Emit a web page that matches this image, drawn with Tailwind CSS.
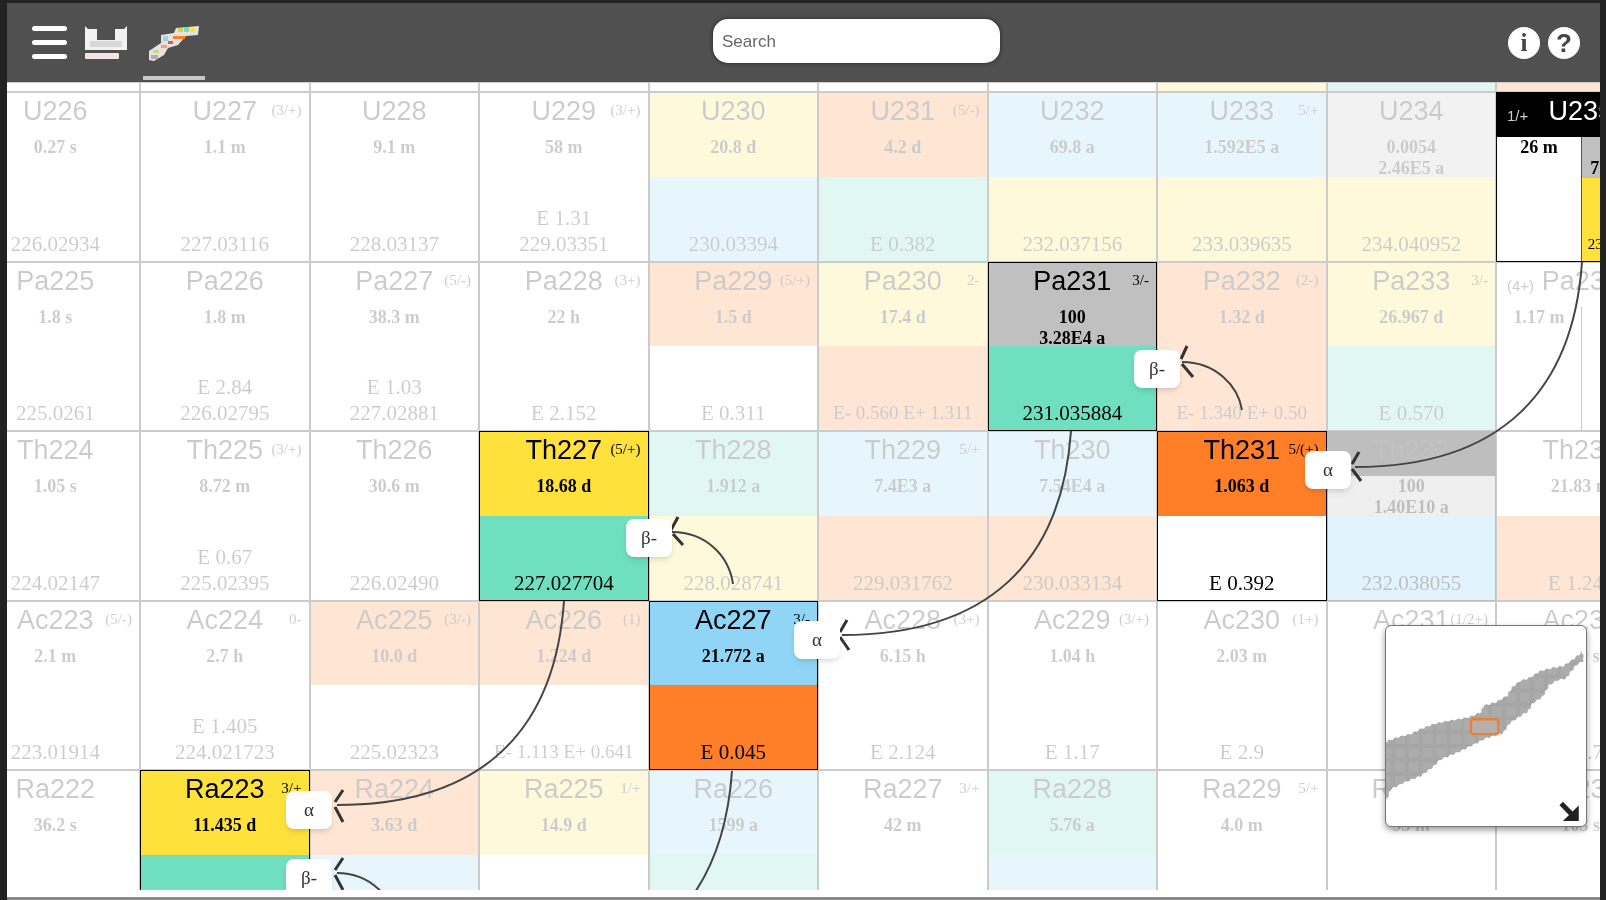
<!DOCTYPE html>
<html>
<head>
<meta charset="utf-8">
<title>Nuclide chart</title>
<script src="https://cdn.jsdelivr.net/npm/@tailwindcss/browser@4"></script>
</head>
<body class="m-0 overflow-hidden bg-[#222] font-['Liberation_Serif',serif]">
<div class="flex h-[900px] w-[1606px] flex-col bg-[#222] pt-[3px] pr-[6px] pl-[7px] blur-[0.6px]">

  <header class="relative flex h-[79px] shrink-0 items-center bg-[#505050] pl-[25px] pr-[20px]">
    <div class="flex h-[33px] w-[35px] flex-col justify-between">
      <span class="h-[5px] rounded-sm bg-white"></span>
      <span class="h-[5px] rounded-sm bg-white"></span>
      <span class="h-[5px] rounded-sm bg-white"></span>
    </div>
    <svg class="ml-[17px]" width="44" height="36" viewBox="84 27 44 36"><path d="M85 28 L88 31 H97 V42 H115 V31 L124 31 L127 28 V52 H85 Z" fill="#f2f2f2"/><rect x="90" y="43" width="32" height="6" fill="#d8d8d8"/><rect x="85" y="55" width="34" height="6" rx="1" fill="#f4e6e6"/></svg>
    <div class="relative ml-[15px] flex h-[79px] w-[62px] items-center justify-center">
      <svg width="52" height="36" viewBox="147 27 52 36"><path d="M148 62 L148 53 L160 45 L160 37 L173 35 L175 30 L198 28 L197 37 L185 38 L177 47 L167 50 L163 57 L153 63 Z" fill="#e8e2de"/><rect x="177" y="30" width="5" height="4" fill="#d8d050"/><rect x="183" y="29" width="5" height="5" fill="#6fdfc0"/><rect x="189" y="30" width="5" height="4" fill="#ffe13c"/><rect x="172" y="38" width="12" height="3" fill="#ff7f28"/><rect x="162" y="38" width="5" height="5" fill="#96d4f0"/><rect x="167" y="43" width="5" height="3" fill="#e05a50"/><rect x="160" y="47" width="6" height="3" fill="#ff9a80"/><rect x="152" y="52" width="6" height="3" fill="#c8d890"/><rect x="150" y="57" width="7" height="4" fill="#c0a8a8"/></svg>
      <span class="absolute right-0 bottom-[2px] left-0 h-[4px] bg-[#c8c8c8]"></span>
    </div>
    <input class="absolute top-[16px] left-[706px] h-[44px] w-[287px] rounded-[15px] bg-white pt-[2px] pl-[9px] font-['Liberation_Sans',sans-serif] text-[17px] shadow-[0_0_4px_#222] placeholder:text-[#666]" placeholder="Search">
    <div class="ml-auto flex gap-[8px]">
      <span class="flex size-[32px] items-center justify-center rounded-full bg-white text-[25px] font-bold leading-none text-[#444]">i</span>
      <span class="flex size-[32px] items-center justify-center rounded-full bg-white font-['Liberation_Sans',sans-serif] text-[26px] font-bold leading-none text-[#444]">?</span>
    </div>
  </header>

  <main class="flex flex-1 flex-col bg-white">
    <div class="relative h-[808px] shrink-0 overflow-hidden">
      <div class="ml-[-36.5px] grid grid-cols-[repeat(10,169.5px)] grid-rows-[10px_repeat(5,169.5px)] text-center text-black *:relative *:border *:border-black [&_h3]:h-[44px] [&_h3]:pt-[1px] [&_h3]:font-['Liberation_Sans',sans-serif] [&_h3]:text-[27px] [&_h3]:leading-[34px] [&_h4]:text-[21px] [&_h4]:font-normal [&_h4]:leading-[26px] [&_p]:text-[18px] [&_p]:font-bold [&_p]:leading-[21px] [&_i]:absolute [&_i]:top-[6px] [&_i]:right-[7px] [&_i]:text-[15px] [&_i]:not-italic [&_section]:flex [&_section]:h-1/2 [&_section]:flex-col [&_section]:justify-end [&_section]:pb-[4px]">

        <!-- row above, only its lower edge shows -->
        <div class="opacity-20"></div><div class="opacity-20"></div><div class="opacity-20"></div><div class="opacity-20"></div><div class="opacity-20"></div><div class="opacity-20"></div><div class="opacity-20"></div>
        <div class="bg-[#ffe650] opacity-20"></div><div class="bg-[#6fdfc0] opacity-20"></div><div class="bg-[#ff7f28] opacity-20"></div>

        <!-- U -->
        <div class="opacity-20"><div class="h-1/2"><h3>U226</h3><p>0.27 s</p></div><section><h4>226.02934</h4></section></div>
        <div class="opacity-20"><div class="h-1/2"><i>(3/+)</i><h3>U227</h3><p>1.1 m</p></div><section><h4>227.03116</h4></section></div>
        <div class="opacity-20"><div class="h-1/2"><h3>U228</h3><p>9.1 m</p></div><section><h4>228.03137</h4></section></div>
        <div class="opacity-20"><div class="h-1/2"><i>(3/+)</i><h3>U229</h3><p>58 m</p></div><section><h4>E 1.31</h4><h4>229.03351</h4></section></div>
        <div class="opacity-20"><div class="h-1/2 bg-[#ffe650]"><h3>U230</h3><p>20.8 d</p></div><section class="bg-[#8cd7fa]"><h4>230.03394</h4></section></div>
        <div class="opacity-20"><div class="h-1/2 bg-[#ff7f28]"><i>(5/-)</i><h3>U231</h3><p>4.2 d</p></div><section class="bg-[#6fdfc0]"><h4>E 0.382</h4></section></div>
        <div class="opacity-20"><div class="h-1/2 bg-[#8cd7fa]"><h3>U232</h3><p>69.8 a</p></div><section class="bg-[#ffe650]"><h4>232.037156</h4></section></div>
        <div class="opacity-20"><div class="h-1/2 bg-[#8cd7fa]"><i>5/+</i><h3>U233</h3><p>1.592E5 a</p></div><section class="bg-[#ffe650]"><h4>233.039635</h4></section></div>
        <div class="opacity-20"><div class="h-1/2 bg-[#c0c0c0]"><h3>U234</h3><p>0.0054</p><p>2.46E5 a</p></div><section class="bg-[#ffe650]"><h4>234.040952</h4></section></div>
        <div class="flex flex-col bg-white">
          <h3 class="relative shrink-0 bg-black text-white"><i class="!right-auto !left-[10px] text-[#ccc]">1/+</i>U235</h3>
          <div class="flex flex-1">
            <div class="w-[85px] shrink-0 border-r border-[#555]"><p>26 m</p></div>
            <div class="flex flex-1 flex-col"><div class="h-[41px] bg-[#c0c0c0]"><p>0.72</p><p>7.04E8 a</p></div><section class="flex-1 !h-auto bg-[#ffe13c]"><h4 class="!text-[15px]">235.043923</h4></section></div>
          </div>
        </div>

        <!-- Pa -->
        <div class="opacity-20"><div class="h-1/2"><h3>Pa225</h3><p>1.8 s</p></div><section><h4>225.0261</h4></section></div>
        <div class="opacity-20"><div class="h-1/2"><h3>Pa226</h3><p>1.8 m</p></div><section><h4>E 2.84</h4><h4>226.02795</h4></section></div>
        <div class="opacity-20"><div class="h-1/2"><i>(5/-)</i><h3>Pa227</h3><p>38.3 m</p></div><section><h4>E 1.03</h4><h4>227.02881</h4></section></div>
        <div class="opacity-20"><div class="h-1/2"><i>(3+)</i><h3>Pa228</h3><p>22 h</p></div><section><h4>E 2.152</h4></section></div>
        <div class="opacity-20"><div class="h-1/2 bg-[#ff7f28]"><i>(5/+)</i><h3>Pa229</h3><p>1.5 d</p></div><section><h4>E 0.311</h4></section></div>
        <div class="opacity-20"><div class="h-1/2 bg-[#ffe650]"><i>2-</i><h3>Pa230</h3><p>17.4 d</p></div><section class="bg-[#ff7f28]"><h4 class="!text-[19px]">E- 0.560 E+ 1.311</h4></section></div>
        <div class="bg-white"><div class="h-1/2 bg-[#c0c0c0]"><i>3/-</i><h3>Pa231</h3><p>100</p><p>3.28E4 a</p></div><section class="bg-[#6fdfc0]"><h4>231.035884</h4></section></div>
        <div class="opacity-20"><div class="h-1/2 bg-[#ff7f28]"><i>(2-)</i><h3>Pa232</h3><p>1.32 d</p></div><section class="bg-[#ff7f28]"><h4 class="!text-[19px]">E- 1.340 E+ 0.50</h4></section></div>
        <div class="opacity-20"><div class="h-1/2 bg-[#ffe650]"><i>3/-</i><h3>Pa233</h3><p>26.967 d</p></div><section class="bg-[#6fdfc0]"><h4>E 0.570</h4></section></div>
        <div class="flex flex-col opacity-20">
          <h3 class="relative shrink-0"><i class="!right-auto !left-[10px]">(4+)</i>Pa234</h3>
          <div class="flex flex-1"><div class="w-[85px] shrink-0 border-r border-black"><p>1.17 m</p></div><div class="flex-1"><p>6.70 h</p></div></div>
        </div>

        <!-- Th -->
        <div class="opacity-20"><div class="h-1/2"><h3>Th224</h3><p>1.05 s</p></div><section><h4>224.02147</h4></section></div>
        <div class="opacity-20"><div class="h-1/2"><i>(3/+)</i><h3>Th225</h3><p>8.72 m</p></div><section><h4>E 0.67</h4><h4>225.02395</h4></section></div>
        <div class="opacity-20"><div class="h-1/2"><h3>Th226</h3><p>30.6 m</p></div><section><h4>226.02490</h4></section></div>
        <div class="bg-white"><div class="h-1/2 bg-[#ffe13c]"><i>(5/+)</i><h3>Th227</h3><p>18.68 d</p></div><section class="bg-[#6fdfc0]"><h4>227.027704</h4></section></div>
        <div class="opacity-20"><div class="h-1/2 bg-[#6fdfc0]"><h3>Th228</h3><p>1.912 a</p></div><section class="bg-[#ffe650]"><h4>228.028741</h4></section></div>
        <div class="opacity-20"><div class="h-1/2 bg-[#8cd7fa]"><i>5/+</i><h3>Th229</h3><p>7.4E3 a</p></div><section class="bg-[#ff7f28]"><h4>229.031762</h4></section></div>
        <div class="opacity-20"><div class="h-1/2 bg-[#8cd7fa]"><h3>Th230</h3><p>7.54E4 a</p></div><section class="bg-[#ff7f28]"><h4>230.033134</h4></section></div>
        <div class="bg-white"><div class="h-1/2 bg-[#ff7f28]"><i>5/(+)</i><h3>Th231</h3><p>1.063 d</p></div><section><h4>E 0.392</h4></section></div>
        <div class="opacity-25"><div class="h-1/2 bg-[#c0c0c0]"><h3 class="bg-black text-[#111]">Th232</h3><p>100</p><p>1.40E10 a</p></div><section class="bg-[#8cd7fa]"><h4>232.038055</h4></section></div>
        <div class="opacity-20"><div class="h-1/2"><h3>Th233</h3><p>21.83 m</p></div><section class="bg-[#ff7f28]"><h4>E 1.245</h4></section></div>

        <!-- Ac -->
        <div class="opacity-20"><div class="h-1/2"><i>(5/-)</i><h3>Ac223</h3><p>2.1 m</p></div><section><h4>223.01914</h4></section></div>
        <div class="opacity-20"><div class="h-1/2"><i>0-</i><h3>Ac224</h3><p>2.7 h</p></div><section><h4>E 1.405</h4><h4>224.021723</h4></section></div>
        <div class="opacity-20"><div class="h-1/2 bg-[#ff7f28]"><i>(3/-)</i><h3>Ac225</h3><p>10.0 d</p></div><section><h4>225.02323</h4></section></div>
        <div class="opacity-20"><div class="h-1/2 bg-[#ff7f28]"><i>(1)</i><h3>Ac226</h3><p>1.224 d</p></div><section><h4 class="!text-[19px]">E- 1.113 E+ 0.641</h4></section></div>
        <div class="bg-white"><div class="h-1/2 bg-[#90d5f5]"><i>3/-</i><h3>Ac227</h3><p>21.772 a</p></div><section class="bg-[#ff7f28]"><h4>E 0.045</h4></section></div>
        <div class="opacity-20"><div class="h-1/2"><i>(3+)</i><h3>Ac228</h3><p>6.15 h</p></div><section><h4>E 2.124</h4></section></div>
        <div class="opacity-20"><div class="h-1/2"><i>(3/+)</i><h3>Ac229</h3><p>1.04 h</p></div><section><h4>E 1.17</h4></section></div>
        <div class="opacity-20"><div class="h-1/2"><i>(1+)</i><h3>Ac230</h3><p>2.03 m</p></div><section><h4>E 2.9</h4></section></div>
        <div class="opacity-20"><div class="h-1/2"><i>(1/2+)</i><h3>Ac231</h3><p>7.5 m</p></div><section><h4>E 2.1</h4></section></div>
        <div class="opacity-20"><div class="h-1/2"><h3>Ac232</h3><p>119 s</p></div><section><h4>E 3.7</h4></section></div>

        <!-- Ra -->
        <div class="opacity-20"><div class="h-1/2"><h3>Ra222</h3><p>36.2 s</p></div><section></section></div>
        <div class="bg-white"><div class="h-1/2 bg-[#ffe13c]"><i>3/+</i><h3>Ra223</h3><p>11.435 d</p></div><section class="bg-[#6fdfc0]"></section></div>
        <div class="opacity-20"><div class="h-1/2 bg-[#ff7f28]"><h3>Ra224</h3><p>3.63 d</p></div><section class="bg-[#8cd7fa]"></section></div>
        <div class="opacity-20"><div class="h-1/2 bg-[#ffe650]"><i>1/+</i><h3>Ra225</h3><p>14.9 d</p></div><section></section></div>
        <div class="opacity-20"><div class="h-1/2 bg-[#8cd7fa]"><h3>Ra226</h3><p>1599 a</p></div><section class="bg-[#6fdfc0]"></section></div>
        <div class="opacity-20"><div class="h-1/2"><i>3/+</i><h3>Ra227</h3><p>42 m</p></div><section></section></div>
        <div class="opacity-20"><div class="h-1/2 bg-[#6fdfc0]"><h3>Ra228</h3><p>5.76 a</p></div><section class="bg-[#8cd7fa]"></section></div>
        <div class="opacity-20"><div class="h-1/2"><i>5/+</i><h3>Ra229</h3><p>4.0 m</p></div><section></section></div>
        <div class="opacity-20"><div class="h-1/2"><h3>Ra230</h3><p>93 m</p></div><section></section></div>
        <div class="opacity-20"><div class="h-1/2"><h3>Ra231</h3><p>103 s</p></div><section></section></div>
      </div>

      <!-- decay arrows and their labels, in page coordinates -->
      <div class="absolute top-[-82px] left-[-7px] h-[900px] w-[1606px]">
        <svg class="absolute inset-0" width="1606" height="900" viewBox="0 0 1606 900" fill="none" stroke="#444" stroke-width="2">
          <path d="M733 584 C729 556 706 532 672 532"/>
          <path d="M1242 410 C1238 386 1216 362 1182 362"/>
          <path d="M397 925 C393 897 370 873 337 873"/>
          <path d="M1582 262 C1573 391 1501 467 1355 467"/>
          <path d="M1071 431 C1062 560 990 635 842 635"/>
          <path d="M564 601 C555 730 483 805 337 805"/>
          <path d="M732 771 C723 900 651 976 505 976"/>
          <g stroke="#333" stroke-width="3">
            <path d="M678 517 L671 530 M673 534 L683 545"/>
            <path d="M1187 346 L1181 359 M1182 364 L1193 377"/>
            <path d="M1359 452 L1352 464 M1352 469 L1361 481"/>
            <path d="M847 620 L840 632 M840 637 L849 650"/>
            <path d="M343 790 L335 802 M335 807 L343 822"/>
            <path d="M343 858 L335 870 M335 875 L343 890"/>
          </g>
        </svg>
        <span class="absolute top-[519px] left-[626px] flex h-[38px] w-[46px] items-center justify-center rounded-lg bg-white text-[19px] text-[#333] shadow-md">β-</span>
        <span class="absolute top-[350px] left-[1134px] flex h-[38px] w-[46px] items-center justify-center rounded-lg bg-white text-[19px] text-[#333] shadow-md">β-</span>
        <span class="absolute top-[451px] left-[1305px] flex h-[38px] w-[46px] items-center justify-center rounded-lg bg-white text-[19px] text-[#333] shadow-md">α</span>
        <span class="absolute top-[621px] left-[794px] flex h-[38px] w-[46px] items-center justify-center rounded-lg bg-white text-[19px] text-[#333] shadow-md">α</span>
        <span class="absolute top-[791px] left-[286px] flex h-[38px] w-[46px] items-center justify-center rounded-lg bg-white text-[19px] text-[#333] shadow-md">α</span>
        <span class="absolute top-[859px] left-[286px] flex h-[38px] w-[46px] items-center justify-center rounded-lg bg-white text-[19px] text-[#333] shadow-md">β-</span>

        <!-- minimap -->
        <div class="absolute top-[625px] left-[1385px] size-[202px] overflow-hidden rounded-md border border-[#777] bg-white shadow-[0_3px_6px_#0006]">
          <svg class="size-full" viewBox="195 105 605 605">
            <defs><pattern id="plaid" width="42" height="42" patternUnits="userSpaceOnUse"><rect width="42" height="42" fill="#acacac"/><rect width="12" height="42" fill="#a6a6a6"/><rect width="42" height="12" fill="#a6a6a6"/></pattern></defs>
            <path fill="url(#plaid)" stroke="#fff" stroke-width="6" stroke-dasharray="10 10" d="M190 455 L230 440 L270 430 L300 415 L340 400 L375 392 L445 380 L480 365 L490 345 L525 335 L560 315 L575 290 L600 270 L630 260 L660 240 L700 230 L730 225 L760 205 L790 180 L795 210 L770 225 L740 265 L715 270 L690 285 L670 320 L640 340 L625 365 L600 380 L570 400 L550 430 L500 445 L450 470 L410 490 L360 510 L335 535 L300 560 L250 580 L210 600 L200 630 L190 630 Z"/>
            <rect x="452" y="387" width="83" height="45" rx="8" fill="#b8b0a8" stroke="#e8803a" stroke-width="7"/>
            <path d="M725 642 L762 680" stroke="#222" stroke-width="15" fill="none"/>
            <path d="M778 648 V695 H730 Z" fill="#222"/>
          </svg>
        </div>
      </div>
    </div>
    <div class="flex-1"></div>
    <div class="h-[3px] shrink-0 bg-[#8a8a8a]"></div>
  </main>
</div>
</body>
</html>
